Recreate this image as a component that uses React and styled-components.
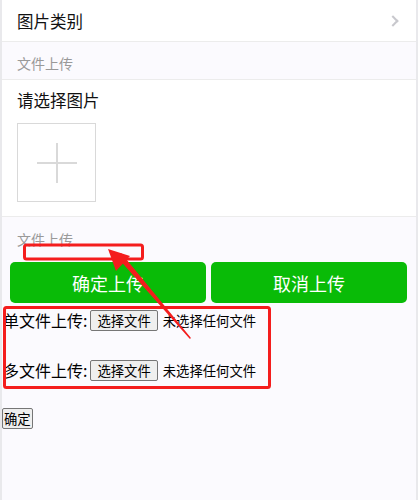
import styled, { createGlobalStyle } from "styled-components";

const GlobalStyle = createGlobalStyle`
  html, body {
    margin: 0;
    padding: 0;
    background: #ffffff;
  }
  body {
    font-family: "Noto Sans CJK SC", "Noto Sans", sans-serif;
  }
`;

const Page = styled.div`
  position: relative;
  width: 414px;
  min-height: 500px;
  background: #fbfafe;
  border-left: 2px solid #e9e9ec;
  border-right: 2px solid #e9e9ec;
  overflow: hidden;
`;

const Cells = styled.div`
  background: #ffffff;
  border-bottom: 1px solid #ececec;
`;

const Cell = styled.div`
  display: flex;
  align-items: center;
  justify-content: space-between;
  height: 41px;
  padding: 0 15px;
  font-size: 16.5px;
  color: #111;
`;

const Arrow = styled.span`
  width: 6px;
  height: 6px;
  border-top: 2px solid #c8c8cd;
  border-right: 2px solid #c8c8cd;
  transform: rotate(45deg);
  margin-right: 4px;
`;

const SectionTitle = styled.div`
  padding: ${(p) => p.$pad || "13px 15px 7px"};
  font-size: 14px;
  line-height: 17px;
  color: #999999;
  border-bottom: ${(p) => (p.$line ? "1px solid #ececec" : "none")};
`;

const Panel = styled.div`
  background: #ffffff;
  padding: 8px 15px 14px;
  border-bottom: 1px solid #ececec;
`;

const PanelLabel = styled.div`
  font-size: 16.5px;
  line-height: 24px;
  color: #111;
`;

const UploadBox = styled.div`
  width: 77px;
  height: 77px;
  margin-top: 11px;
  border: 1px solid #d9d9d9;
  display: flex;
  align-items: center;
  justify-content: center;
`;

const ButtonRow = styled.div`
  display: flex;
  gap: 5px;
  padding: 0 9px 0 8px;
`;

const GreenButton = styled.button`
  flex: 1;
  height: 41px;
  border: none;
  border-radius: 5px;
  background: #09bb07;
  color: #ffffff;
  font-family: inherit;
  font-size: 18px;
  cursor: pointer;
`;

const Form = styled.div`
  display: flex;
  flex-direction: column;
  align-items: flex-start;
  gap: 26px;
  padding: 5px 0 0 1px;
`;

const FileRow = styled.div`
  display: flex;
  align-items: center;
  height: 24px;
  font-size: 16px;
  color: #000;
`;

const NativeButton = styled.button`
  font-family: inherit;
  font-size: 13.33px;
  line-height: 17px;
  padding: ${(p) => p.$pad || "1px 6px"};
  color: #000;
  background: #efefef;
  border: 1px solid #767676;
  border-radius: 2px;
  margin: ${(p) => p.$margin || "0"};
`;

const NoFile = styled.span`
  font-size: 13.33px;
  margin-left: 5px;
`;

const SubmitWrap = styled.div`
  margin: -3px 0 0 -1px;
`;

const Annotations = styled.svg`
  position: absolute;
  left: -2px;
  top: 0;
  pointer-events: none;
`;

function FileField({ label }) {
  return (
    <FileRow>
      {label}:
      <NativeButton $margin="0 0 0 3px">选择文件</NativeButton>
      <NoFile>未选择任何文件</NoFile>
    </FileRow>
  );
}

export default function App() {
  return (
    <>
      <GlobalStyle />
      <Page>
        <Cells>
          <Cell>
            图片类别
            <Arrow />
          </Cell>
        </Cells>
        <SectionTitle $line>文件上传</SectionTitle>
        <Panel>
          <PanelLabel>请选择图片</PanelLabel>
          <UploadBox>
            <svg width="40" height="40" viewBox="0 0 40 40">
              <path d="M20 0v40M0 20h40" stroke="#d9d9d9" strokeWidth="2" />
            </svg>
          </UploadBox>
        </Panel>
        <SectionTitle $pad="14px 15px 14px">文件上传</SectionTitle>
        <ButtonRow>
          <GreenButton>确定上传</GreenButton>
          <GreenButton>取消上传</GreenButton>
        </ButtonRow>
        <Form>
          <FileField label="单文件上传" />
          <FileField label="多文件上传" />
          <SubmitWrap>
            <NativeButton $pad="1px 1px">确定</NativeButton>
          </SubmitWrap>
        </Form>
        <Annotations width="420" height="500" viewBox="0 0 420 500">
          <rect x="24.5" y="245" width="118" height="14" rx="2" fill="none" stroke="#f41d1d" strokeWidth="3" />
          <rect x="4.5" y="307.5" width="265" height="80" rx="2" fill="none" stroke="#f41d1d" strokeWidth="3" />
          <path d="M190 338 L118 257 L121 254 Z" fill="#f41d1d" stroke="#f41d1d" strokeWidth="1.5" strokeLinejoin="round" />
          <path d="M108 249 L130 256 L116 271 Z" fill="#f41d1d" />
        </Annotations>
      </Page>
    </>
  );
}
